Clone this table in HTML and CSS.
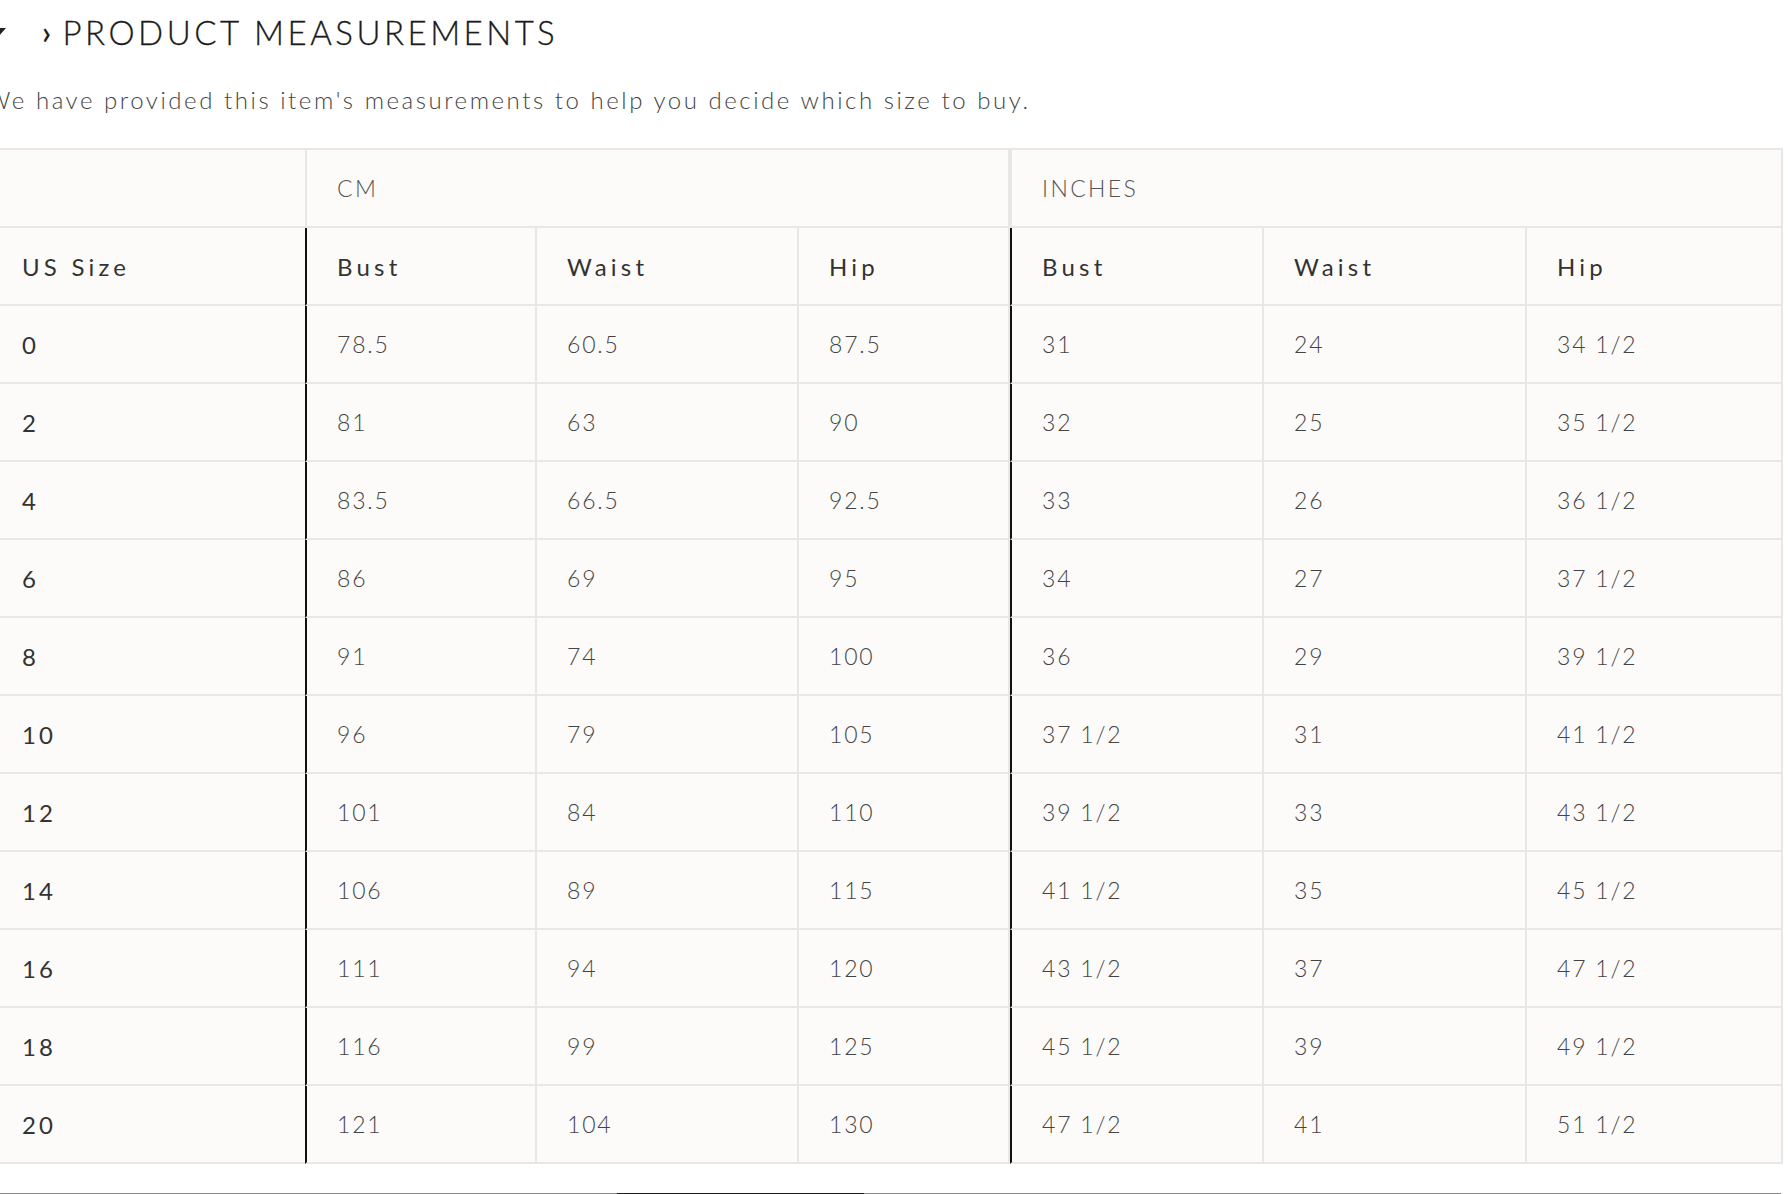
FILE: index.html
```html
<!DOCTYPE html>
<html lang="en">
<head>
<meta charset="utf-8">
<title>Product Measurements</title>
<link rel="stylesheet" href="styles.css">
</head>
<body>
<div class="page">
  <h2 class="title"><span class="tri"></span><span class="chev">›</span>PRODUCT MEASUREMENTS</h2>
  <p class="intro">We have provided this item's measurements to help you decide which size to buy.</p>
  <table class="sizes">
    <colgroup>
      <col class="c1"><col class="c2"><col class="c3"><col class="c4"><col class="c5"><col class="c6"><col class="c7">
    </colgroup>
    <thead>
      <tr class="units">
        <th></th>
        <th colspan="3">CM</th>
        <th colspan="3">INCHES</th>
      </tr>
      <tr class="labels">
        <th>US Size</th>
        <th class="sep">Bust</th><th>Waist</th><th>Hip</th>
        <th class="sep">Bust</th><th>Waist</th><th>Hip</th>
      </tr>
    </thead>
    <tbody>
      <tr><td>0</td><td class="sep">78.5</td><td>60.5</td><td>87.5</td><td class="sep">31</td><td>24</td><td>34 1/2</td></tr>
      <tr><td>2</td><td class="sep">81</td><td>63</td><td>90</td><td class="sep">32</td><td>25</td><td>35 1/2</td></tr>
      <tr><td>4</td><td class="sep">83.5</td><td>66.5</td><td>92.5</td><td class="sep">33</td><td>26</td><td>36 1/2</td></tr>
      <tr><td>6</td><td class="sep">86</td><td>69</td><td>95</td><td class="sep">34</td><td>27</td><td>37 1/2</td></tr>
      <tr><td>8</td><td class="sep">91</td><td>74</td><td>100</td><td class="sep">36</td><td>29</td><td>39 1/2</td></tr>
      <tr><td>10</td><td class="sep">96</td><td>79</td><td>105</td><td class="sep">37 1/2</td><td>31</td><td>41 1/2</td></tr>
      <tr><td>12</td><td class="sep">101</td><td>84</td><td>110</td><td class="sep">39 1/2</td><td>33</td><td>43 1/2</td></tr>
      <tr><td>14</td><td class="sep">106</td><td>89</td><td>115</td><td class="sep">41 1/2</td><td>35</td><td>45 1/2</td></tr>
      <tr><td>16</td><td class="sep">111</td><td>94</td><td>120</td><td class="sep">43 1/2</td><td>37</td><td>47 1/2</td></tr>
      <tr><td>18</td><td class="sep">116</td><td>99</td><td>125</td><td class="sep">45 1/2</td><td>39</td><td>49 1/2</td></tr>
      <tr><td>20</td><td class="sep">121</td><td>104</td><td>130</td><td class="sep">47 1/2</td><td>41</td><td>51 1/2</td></tr>
    </tbody>
  </table>
  <div class="rule"><span class="r1"></span><span class="r2"></span><span class="r3"></span></div>
</div>
</body>
</html>
```
FILE: styles.css
```css
html, body {
  margin: 0;
  padding: 0;
  background: #ffffff;
}
body {
  width: 1788px;
  height: 1194px;
  overflow: hidden;
  font-family: "Lato", "Liberation Sans", sans-serif;
  color: #222;
}
.page {
  margin-left: -10px;
  width: 1791px;
}
.title {
  margin: 0;
  padding-top: 12px;
  height: 40px;
  display: flex;
  align-items: center;
  font-size: 33px;
  font-weight: 300;
  letter-spacing: 3.5px;
  line-height: 40px;
  color: #1a1a1a;
  -webkit-text-stroke: 0.3px #1a1a1a;
}
.tri {
  width: 0;
  height: 0;
  border-left: 8px solid transparent;
  border-right: 8px solid transparent;
  border-top: 9px solid #222;
  margin-right: 36px;
}
.chev {
  font-size: 32px;
  margin-right: 8px;
  font-weight: 400;
}
.intro {
  margin: 34px 0 0 -4px;
  font-size: 24px;
  font-weight: 300;
  letter-spacing: 2.55px;
  line-height: 28px;
  color: #444;
}
.sizes {
  margin-top: 34px;
  border-collapse: separate;
  border-spacing: 0;
  table-layout: fixed;
  width: 1791px;
  background: #fcfbf9;
  border-top: 2px solid #e8e7e5;
  border-right: 2px solid #e8e7e5;
}
.c1 { width: 315px; }
.c2 { width: 232px; }
.c3 { width: 262px; }
.c4 { width: 211px; }
.c5 { width: 254px; }
.c6 { width: 263px; }
.c7 { width: 254px; }
.sizes th,
.sizes td {
  height: 78px;
  padding: 0 0 0 30px;
  text-align: left;
  vertical-align: middle;
  border-bottom: 2px solid #e8e7e5;
  border-right: 2px solid #e8e7e5;
  font-size: 23px;
  box-sizing: border-box;
  white-space: nowrap;
}
.sizes th:last-child,
.sizes td:last-child {
  border-right: none;
}
.sizes th:first-child,
.sizes td:first-child {
  padding-left: 32px;
  border-right: none;
}
.units th {
  font-weight: 300;
  color: #555;
  letter-spacing: 2.4px;
  border-left: 2px solid #e8e7e5;
}
.units th:first-child {
  border-left: none;
}
.labels th {
  font-weight: 400;
  color: #333;
  font-size: 24px;
  letter-spacing: 4.2px;
}
.sizes .sep {
  border-left: 2px solid #111;
}
.sizes td {
  font-weight: 300;
  color: #444;
  letter-spacing: 1.8px;
}
.sizes td:first-child {
  font-weight: 400;
  color: #333;
  font-size: 24px;
  letter-spacing: 3px;
}
.rule {
  margin-top: 29px;
  display: flex;
  height: 2px;
  margin-left: 10px;
}
.r1 { width: 617px; background: #8a8a8a; }
.r2 { width: 247px; background: #1a1a1a; }
.r3 { flex: 1; background: #8a8a8a; }
```
